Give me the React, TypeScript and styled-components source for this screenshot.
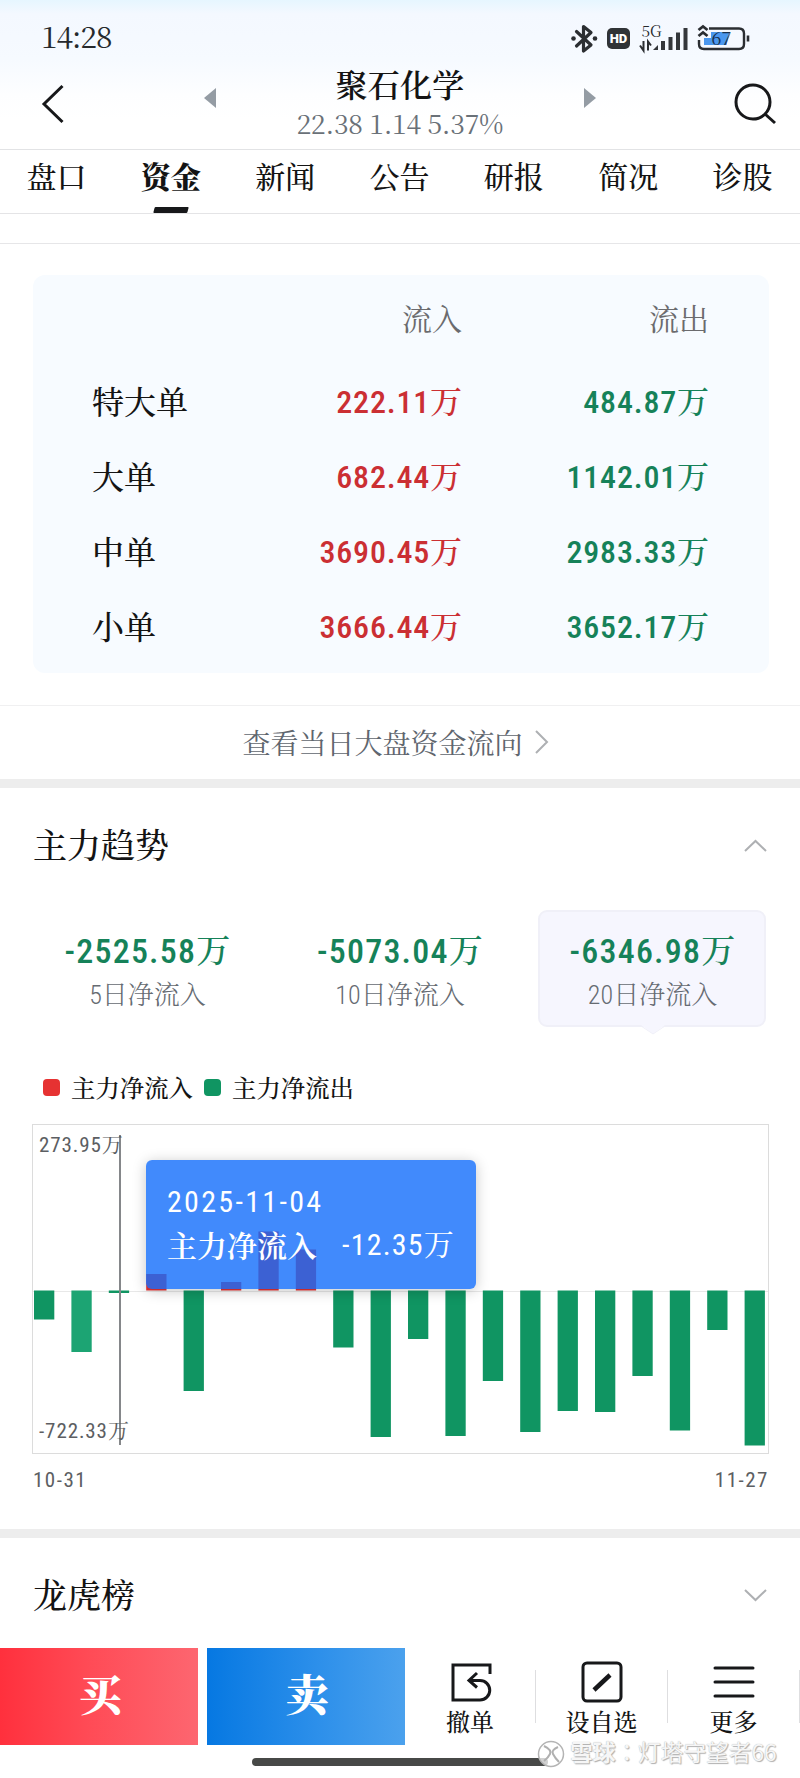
import React from "react";
import styled, { createGlobalStyle } from "styled-components";

const serif = `"Noto Serif CJK SC", "Source Han Serif SC", "Liberation Serif", "Noto Sans CJK SC", serif`;
const digits = `Roboto, "Noto Serif CJK SC", "Noto Sans CJK SC", sans-serif`;

const GlobalStyle = createGlobalStyle`
  * { box-sizing: border-box; }
  body { margin: 0; background: #fff; }
`;

const Page = styled.div`
  width: 800px;
  height: 1778px;
  overflow: hidden;
  display: flex;
  flex-direction: column;
  background: #fff;
  color: #141414;
  font-family: ${serif};
  white-space: nowrap;
`;

const Top = styled.header`
  height: 150px;
  flex: none;
  border-bottom: 1px solid #e2e3e5;
  background: linear-gradient(#e6f6ff 0, #f4f8ff 14px, #f6faff 60px, #fdfeff 95px, #fff 120px);
`;

const StatusBar = styled.div`
  height: 60px;
  display: flex;
  align-items: center;
  justify-content: space-between;
  padding: 15px 48px 0 41px;
`;

const Clock = styled.span`
  font-size: 30px;
  line-height: 40px;
  letter-spacing: -1.1px;
  margin-top: -5px;
  color: #26292d;
`;

const StatusGlyphs = styled.svg`
  overflow: visible;
`;

const NavBar = styled.div`
  height: 88px;
  display: flex;
  justify-content: space-between;
  padding: 0 22px 0 40px;
`;

const NavIcon = styled.svg<{ $top: number }>`
  margin-top: ${(p) => p.$top}px;
  flex: none;
`;

const TitleGroup = styled.div`
  width: 392px;
  display: flex;
  justify-content: space-between;
`;

const Title = styled.div`
  display: flex;
  flex-direction: column;
  align-items: center;
`;

const StockName = styled.div`
  margin-top: 3px;
  font-size: 32px;
  font-weight: 600;
  line-height: 40px;
  letter-spacing: 0.3px;
`;

const Quote = styled.div`
  font-size: 26.5px;
  line-height: 40px;
  letter-spacing: -0.2px;
  color: #6a7178;
`;

const Tabs = styled.nav`
  height: 64px;
  flex: none;
  display: flex;
  justify-content: space-between;
  padding: 0 27px 0 26px;
  border-bottom: 1px solid #e4e4e6;
`;

const Tab = styled.div<{ $active?: boolean }>`
  width: 61px;
  display: flex;
  flex-direction: column;
  align-items: center;
  justify-content: space-between;
  font-size: 30px;
  line-height: 50px;
  font-weight: ${(p) => (p.$active ? 900 : 500)};
`;

const TabMark = styled.i`
  width: 34px;
  height: 6px;
  margin-top: 3px;
  border-radius: 1px;
  background: #17181a;
  transform: skewX(-15deg);
`;

const Strip = styled.div`
  height: 30px;
  flex: none;
  border-bottom: 1px solid #e6e6e8;
`;

const FlowCard = styled.section`
  flex: none;
  height: 398px;
  margin: 31px 31px 0 33px;
  padding: 12px 60px 0 59px;
  border-radius: 12px;
  background: #f7fbff;
`;

const FlowRow = styled.div<{ $head?: boolean }>`
  display: grid;
  grid-template-columns: 122px 248px 1fr;
  align-items: center;
  height: ${(p) => (p.$head ? 60 : 74.8)}px;
  margin-bottom: ${(p) => (p.$head ? 16 : 0)}px;
  font-size: ${(p) => (p.$head ? 30 : 32)}px;
  color: ${(p) => (p.$head ? "#6b6b6e" : "#141414")};
  font-weight: ${(p) => (p.$head ? 400 : 500)};
`;

const RightCell = styled.span`
  text-align: right;
`;

const Amount = styled.span<{ $tone: "in" | "out" }>`
  font-family: ${digits};
  text-align: right;
  font-size: 32px;
  font-weight: 500;
  font-stretch: 75%;
  letter-spacing: 0.8px;
  margin: -2px -0.8px 0 0;
  color: ${(p) => (p.$tone === "in" ? "#cb2f33" : "#168259")};
`;

const MarketLink = styled.div`
  height: 74px;
  margin-top: 32px;
  flex: none;
  display: flex;
  align-items: center;
  justify-content: center;
  gap: 12px;
  padding: 0 9px 2px 0;
  border-top: 1px solid #f0f0f1;
  font-size: 28px;
  color: #5f666e;
`;

const Band = styled.div`
  height: 9px;
  flex: none;
  background: #ededed;
`;

const SectionHead = styled.div<{ $height: number; $lift: number }>`
  height: ${(p) => p.$height}px;
  flex: none;
  display: flex;
  align-items: center;
  justify-content: space-between;
  padding: 0 33px;
  font-size: 34px;
  font-weight: 500;

  > span {
    margin-top: -${(p) => p.$lift}px;
  }
`;

const Stats = styled.div`
  flex: none;
  display: flex;
  justify-content: space-between;
  height: 117px;
  padding: 0 34px 0 33px;
  margin-top: 8px;
`;

const Stat = styled.div<{ $active?: boolean }>`
  position: relative;
  width: 228px;
  border: 2px solid ${(p) => (p.$active ? "#f0f0f8" : "transparent")};
  border-radius: 9px;
  background: ${(p) => (p.$active ? "#f6f6fe" : "transparent")};
  text-align: center;
  font-family: ${digits};
  font-stretch: 75%;
`;

const StatValue = styled.div`
  margin-top: 17px;
  font-size: 34px;
  font-weight: 500;
  line-height: 44px;
  letter-spacing: 1.2px;
  padding-left: 2px;
  color: #168259;
`;

const StatLabel = styled.div`
  margin-top: 4px;
  padding-left: 1px;
  font-size: 26px;
  font-weight: 300;
  line-height: 36px;
  color: #666b72;
`;

const StatTip = styled.svg`
  position: absolute;
  left: 101px;
  top: 113px;
`;

const Legend = styled.div`
  height: 97px;
  flex: none;
  display: flex;
  align-items: center;
  padding: 23px 0 0 43px;
  font-size: 24.4px;
  font-weight: 500;
`;

const Swatch = styled.i<{ $color: string }>`
  width: 17px;
  height: 17px;
  margin-right: 11px;
  border-radius: 4px;
  background: ${(p) => p.$color};
`;

const LegendText = styled.span`
  width: 133px;
  margin-top: -2px;
`;

const Chart = styled.div`
  position: relative;
  flex: none;
  width: 737px;
  height: 330px;
  margin-left: 32px;
  border: 1px solid #dcdcdc;
`;

const Plot = styled.svg`
  display: block;
`;

const AxisLabel = styled.span<{ $top: number }>`
  position: absolute;
  left: 6px;
  top: ${(p) => p.$top}px;
  font-family: ${digits};
  font-size: 21px;
  font-weight: 400;
  font-stretch: 75%;
  letter-spacing: 0.9px;
  line-height: 28px;
  color: #5c5e62;
`;

const Tooltip = styled.div`
  position: absolute;
  left: 113px;
  top: 35px;
  width: 330px;
  height: 129px;
  padding: 20px 21px 0 21px;
  border-radius: 6px;
  background: rgba(17, 109, 251, 0.8);
  box-shadow: 0 2px 14px rgba(0, 0, 0, 0.22);
  color: #fff;
  font-family: ${digits};
  font-size: 30px;
  font-stretch: 75%;
  letter-spacing: 1.2px;
  line-height: 43px;
`;

const TooltipDate = styled.div`
  letter-spacing: 2.3px;
`;

const TooltipRow = styled.div`
  display: flex;
  justify-content: space-between;
`;

const TooltipLabel = styled.span`
  font-family: ${serif};
  font-weight: 600;
  letter-spacing: 0;
`;

const Dates = styled.div`
  height: 75px;
  flex: none;
  display: flex;
  justify-content: space-between;
  padding: 12px 31px 0 33px;
  font-family: ${digits};
  font-size: 21px;
  font-weight: 400;
  font-stretch: 75%;
  letter-spacing: 1.5px;
  line-height: 28px;
  color: #5c5e62;
`;

const Bottom = styled.footer`
  position: relative;
  height: 130px;
  flex: none;
  display: flex;
  align-items: flex-start;
  background: #fff;
`;

const TradeButton = styled.div<{ $kind: "buy" | "sell" }>`
  width: 198px;
  height: 97px;
  margin-right: ${(p) => (p.$kind === "buy" ? 9 : 0)}px;
  display: flex;
  justify-content: center;
  padding-left: 2px;
  color: #fff;
  font-size: 43px;
  font-weight: 900;
  line-height: 89px;
  background: ${(p) =>
    p.$kind === "buy"
      ? "linear-gradient(90deg, #ff303d, #ff4b56 45%, #fd6670)"
      : "linear-gradient(90deg, #0678e2, #2c8fea 55%, #4ba1ed)"};
`;

const Tool = styled.div<{ $width: number }>`
  width: ${(p) => p.$width}px;
  height: 97px;
  display: flex;
  flex-direction: column;
  align-items: center;
  padding-top: 11px;
  font-size: 24px;
  font-weight: 500;
  line-height: 31px;
`;

const Divider = styled.i`
  width: 1px;
  height: 53px;
  margin-top: 22px;
  background: #dedee0;
`;

const HomeBar = styled.div`
  position: absolute;
  left: 252px;
  top: 110px;
  width: 296px;
  height: 8px;
  border-radius: 4px;
  background: #474947;
`;

const Watermark = styled.div`
  position: absolute;
  left: 537px;
  top: 92px;
  display: flex;
  align-items: center;
  gap: 5px;
  height: 28px;
  font-family: "Noto Sans CJK TC", sans-serif;
  font-size: 22.7px;
  line-height: 22px;
  color: #f6f6f6;
  text-shadow: 0 0 1px #aaa, 1px 1px 1px #b0b0b0;

  > span {
    margin-top: -4px;
  }
`;

const rows = [
  ["特大单", "222.11万", "484.87万"],
  ["大单", "682.44万", "1142.01万"],
  ["中单", "3690.45万", "2983.33万"],
  ["小单", "3666.44万", "3652.17万"],
];

const bars = [
  -29, -61.5, -2.5, 16.5, -100.5, 8.5, 59, 41, -57, -146.5,
  -48.5, -145.5, -90.5, -141.5, -120.5, -121.5, -85.5, -140, -39.5, -155,
];

const barColor = (value: number, index: number) => {
  if (value > 0) return "#e63232";
  return index === 1 ? "#1ca473" : "#109562";
};

const StatusIcons = () => (
  <StatusGlyphs width="182" height="32" viewBox="570 22 182 32" fill="none">
    <g stroke="#2b2e32" strokeWidth="3.2" strokeLinejoin="round" strokeLinecap="round">
      <path d="M576.5 31.5 591 45l-7.5 6V26.5l7.5 6L576.5 46" />
    </g>
    <circle cx="573.5" cy="38.5" r="2.3" fill="#2b2e32" />
    <circle cx="595" cy="38.5" r="2.3" fill="#2b2e32" />
    <rect x="607" y="28" width="23" height="21" rx="5" fill="#303336" />
    <text x="618.5" y="43.2" textAnchor="middle" fontFamily="Roboto" fontWeight="900" fontSize="13" fill="#fff">HD</text>
    <text x="641.5" y="37" fontFamily="Noto Serif CJK SC" fontSize="15.5" fill="#26292d">5G</text>
    <path d="M643.5 41v9.5l-3.5-5M648 50.5v-9l3 4" stroke="#2b2e32" strokeWidth="2" />
    <g fill="#34373b">
      <path d="M653 50l5-5v5z" />
      <rect x="661" y="41" width="4" height="9" />
      <rect x="668.5" y="37" width="4" height="13" />
      <rect x="676" y="32.5" width="4" height="17.5" />
      <rect x="683.5" y="28" width="4" height="22" />
    </g>
    <path d="M709 28.5h30q5 0 5 5V44q0 5-5 5h-35q-5 0-5-5v-4" stroke="#2b2e32" strokeWidth="2.4" />
    <path d="M704 38h7v-6h18.5l-3 13H704z" fill="#4a97ee" />
    <path d="M698.5 30l4.5-3.5 4.5 3.5M698.5 36l4.5-3.5 4.5 3.5" stroke="#2b2e32" strokeWidth="2.8" />
    <path d="M748 35.5v6" stroke="#2b2e32" strokeWidth="2.6" />
    <text x="711.5" y="45" fontFamily="Noto Serif CJK SC" fontSize="18" fill="#17304f">67</text>
  </StatusGlyphs>
);

const Chevron = ({ d, width, height }: { d: string; width: number; height: number }) => (
  <svg width={width} height={height} fill="none" stroke="#aeb0b3" strokeWidth="2">
    <path d={d} />
  </svg>
);

export default function App() {
  return (
    <Page>
      <GlobalStyle />
      <Top>
        <StatusBar>
          <Clock>14:28</Clock>
          <StatusIcons />
        </StatusBar>
        <NavBar>
          <NavIcon $top={24} width="26" height="40" fill="none" stroke="#17181a" strokeWidth="3">
            <path d="M22.5 2 4 20l18.5 18" />
          </NavIcon>
          <TitleGroup>
            <NavIcon $top={28} width="12" height="20" fill="#949ca4">
              <path d="M12 0v20L0 10z" />
            </NavIcon>
            <Title>
              <StockName>聚石化学</StockName>
              <Quote>22.38 1.14 5.37%</Quote>
            </Title>
            <NavIcon $top={28} width="12" height="20" fill="#949ca4">
              <path d="M0 0v20l12-10z" />
            </NavIcon>
          </TitleGroup>
          <NavIcon $top={22} width="44" height="44" fill="none" stroke="#17181a" strokeWidth="3">
            <circle cx="19" cy="20" r="17" />
            <path d="m31 32 10 9" />
          </NavIcon>
        </NavBar>
      </Top>
      <Tabs>
        {["盘口", "资金", "新闻", "公告", "研报", "简况", "诊股"].map((name) => (
          <Tab key={name} $active={name === "资金"}>
            {name}
            {name === "资金" && <TabMark />}
          </Tab>
        ))}
      </Tabs>
      <Strip />
      <FlowCard>
        <FlowRow $head>
          <span />
          <RightCell>流入</RightCell>
          <RightCell>流出</RightCell>
        </FlowRow>
        {rows.map(([name, inflow, outflow]) => (
          <FlowRow key={name}>
            <span>{name}</span>
            <Amount $tone="in">{inflow}</Amount>
            <Amount $tone="out">{outflow}</Amount>
          </FlowRow>
        ))}
      </FlowCard>
      <MarketLink>
        查看当日大盘资金流向
        <Chevron width={14} height={24} d="M1 1l11 11L1 23" />
      </MarketLink>
      <Band />
      <SectionHead $height={114} $lift={4}>
        <span>主力趋势</span>
        <Chevron width={23} height={13} d="M1 12 11.5 2 22 12" />
      </SectionHead>
      <Stats>
        <Stat>
          <StatValue>-2525.58万</StatValue>
          <StatLabel>5日净流入</StatLabel>
        </Stat>
        <Stat>
          <StatValue>-5073.04万</StatValue>
          <StatLabel>10日净流入</StatLabel>
        </Stat>
        <Stat $active>
          <StatValue>-6346.98万</StatValue>
          <StatLabel>20日净流入</StatLabel>
          <StatTip width="24" height="10">
            <path d="M0 0h24L12 9z" fill="#f6f6fe" />
            <path d="M0 1 12 9 24 1" fill="none" stroke="#f0f0f8" />
          </StatTip>
        </Stat>
      </Stats>
      <Legend>
        <Swatch $color="#e63232" />
        <LegendText>主力净流入</LegendText>
        <Swatch $color="#109562" />
        <LegendText>主力净流出</LegendText>
      </Legend>
      <Chart>
        <Plot width="735" height="328">
          <path d="M0 166.5H735" stroke="#e8e8e8" />
          {bars.map((value, i) => (
            <rect
              key={i}
              x={1 + i * 37.4}
              y={value > 0 ? 165.5 - value : 165.5}
              width="20.3"
              height={Math.abs(value)}
              fill={barColor(value, i)}
            />
          ))}
          <path d="M87 10V320" stroke="#85878a" strokeWidth="2" />
        </Plot>
        <AxisLabel $top={6}>273.95万</AxisLabel>
        <AxisLabel $top={292}>-722.33万</AxisLabel>
        <Tooltip>
          <TooltipDate>2025-11-04</TooltipDate>
          <TooltipRow>
            <TooltipLabel>主力净流入</TooltipLabel>
            <span>-12.35万</span>
          </TooltipRow>
        </Tooltip>
      </Chart>
      <Dates>
        <span>10-31</span>
        <span>11-27</span>
      </Dates>
      <Band />
      <SectionHead $height={110} $lift={0}>
        <span>龙虎榜</span>
        <Chevron width={23} height={17} d="M1 5 11.5 15 22 5" />
      </SectionHead>
      <Bottom>
        <TradeButton $kind="buy">买</TradeButton>
        <TradeButton $kind="sell">卖</TradeButton>
        <Tool $width={130}>
          <svg width="46" height="46" fill="none" stroke="#17181a" strokeWidth="3">
            <path d="M43 15V6H6v35h27a9.5 9.5 0 0 0 0-19.5H23M30 14l-8 7.5 8 7" />
          </svg>
          撤单
        </Tool>
        <Divider />
        <Tool $width={131}>
          <svg width="46" height="46" fill="none" stroke="#17181a" strokeWidth="3">
            <rect x="4" y="4" width="38" height="38" rx="4" />
            <path d="M15 31 31 16" strokeWidth="4.5" />
          </svg>
          设自选
        </Tool>
        <Divider />
        <Tool $width={131}>
          <svg width="46" height="46" fill="none" stroke="#17181a" strokeWidth="3" strokeLinecap="round">
            <path d="M4 9h38M4 23h38M4 37h38" />
          </svg>
          更多
        </Tool>
        <Divider />
        <HomeBar />
        <Watermark>
          <svg width="28" height="28" fill="none">
            <circle cx="14" cy="14" r="12.5" stroke="#b4b4b4" strokeWidth="1.5" fill="#fff" fillOpacity=".75" />
            <path d="M7 6q8 4 6 8t-6 7M21 7q-7 3-5 7t6 8" stroke="#b0b0b0" strokeWidth="2" />
          </svg>
          <span><b>雪球</b>：灯塔守望者66</span>
        </Watermark>
      </Bottom>
    </Page>
  );
}
